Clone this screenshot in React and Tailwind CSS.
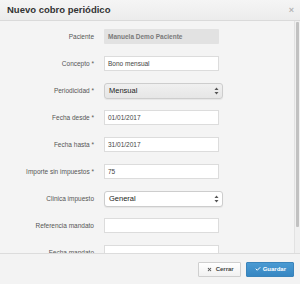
import React from 'react';
import { X, Check } from 'lucide-react';

const FONT = { fontFamily: '"Liberation Sans", Arial, sans-serif' };

const rows = [
    { label: 'Paciente', type: 'disabled', value: 'Manuela Demo Paciente' },
    { label: 'Concepto *', type: 'text', value: 'Bono mensual' },
    { label: 'Periodicidad *', type: 'select', value: 'Mensual', grey: true },
    { label: 'Fecha desde *', type: 'text', value: '01/01/2017' },
    { label: 'Fecha hasta *', type: 'text', value: '31/01/2017' },
    { label: 'Importe sin impuestos *', type: 'text', value: '75' },
    { label: 'Clinica impuesto', type: 'select', value: 'General' },
    { label: 'Referencia mandato', type: 'text', value: '' },
    { label: 'Fecha mandato', type: 'text', value: '' },
];

function Arrows() {
    return (
        <svg width="5" height="8" viewBox="0 0 5 8" className="shrink-0">
            <path d="M2.5 0.5 L4.5 3 L0.5 3 Z" fill="#555" />
            <path d="M2.5 7.5 L4.5 5 L0.5 5 Z" fill="#555" />
        </svg>
    );
}

function Field({ row }) {
    if (row.type === 'disabled') {
        return (
            <div className="w-[115px] h-[15px] bg-[#e2e2e2] rounded-[1px] flex items-center pl-[4px] text-[6.5px] font-bold text-[#7a7a7a]">
                {row.value}
            </div>
        );
    }
    if (row.type === 'select') {
        return (
            <div className={`w-[119px] h-[16px] rounded-[3px] border border-[#cdcdcd] flex items-center justify-between pl-[4px] pr-[3px] text-[7.5px] text-[#222] shadow-[0_1px_1px_rgba(0,0,0,0.06)] ${row.grey ? 'bg-gradient-to-b from-[#f0f0f0] to-[#e6e6e6]' : 'bg-white'}`}>
                <span>{row.value}</span>
                <Arrows />
            </div>
        );
    }
    return (
        <div className="w-[115px] h-[15px] bg-white border border-[#dcdcdc] flex items-center pl-[3px] text-[6.5px] text-[#444]">
            {row.value}
        </div>
    );
}

export default function App() {
    return (
        <div className="w-[300px] h-[284px] flex flex-col bg-[#f4f4f4] overflow-hidden" style={FONT}>
            <div className="h-[21px] shrink-0 flex items-center justify-between pl-[7px] pr-[6px] border-b border-[#dadada] bg-gradient-to-b from-[#f5f5f5] to-[#ececec]">
                <span className="text-[9.5px] font-bold text-[#333]">Nuevo cobro periódico</span>
                <span className="text-[9px] font-bold text-[#b5b5b5] leading-none">×</span>
            </div>

            <div className="flex-1 min-h-0 flex">
                <div className="flex-1 overflow-hidden pt-[2px]">
                    {rows.map(row => (
                        <div key={row.label} className="h-[27px] flex items-center">
                            <div className="w-[94px] text-right text-[6.5px] text-[#555]">{row.label}</div>
                            <div className="ml-[10px]">
                                <Field row={row} />
                            </div>
                        </div>
                    ))}
                </div>
                {/* scrollbar */}
                <div className="w-[6px] shrink-0 bg-[#f0f0f0] border-l border-[#e2e2e2] pt-[1px] pl-[1px]">
                    <div className="h-[205px] w-[3px] bg-[#c1c1c1] rounded-[1px]" />
                </div>
            </div>

            <div className="h-[31px] shrink-0 border-t border-[#dcdcdc] bg-[#f3f3f3] flex items-center justify-end gap-[5px] pr-[6px]">
                <button className="h-[15px] flex items-center gap-[4px] pl-[8px] pr-[6px] border border-[#cfcfcf] rounded-[1px] bg-gradient-to-b from-white to-[#f1f1f1] text-[6px] font-bold text-[#444]">
                    <X size={5} strokeWidth={5} color="#555" />
                    Cerrar
                </button>
                <button className="h-[15px] flex items-center gap-[2px] pl-[8px] pr-[7px] border border-[#3a84bb] rounded-[1px] bg-gradient-to-b from-[#4a9ad3] to-[#3787c2] text-[6px] font-bold text-white">
                    <Check size={6} strokeWidth={4} color="#fff" />
                    Guardar
                </button>
            </div>
        </div>
    );
}
